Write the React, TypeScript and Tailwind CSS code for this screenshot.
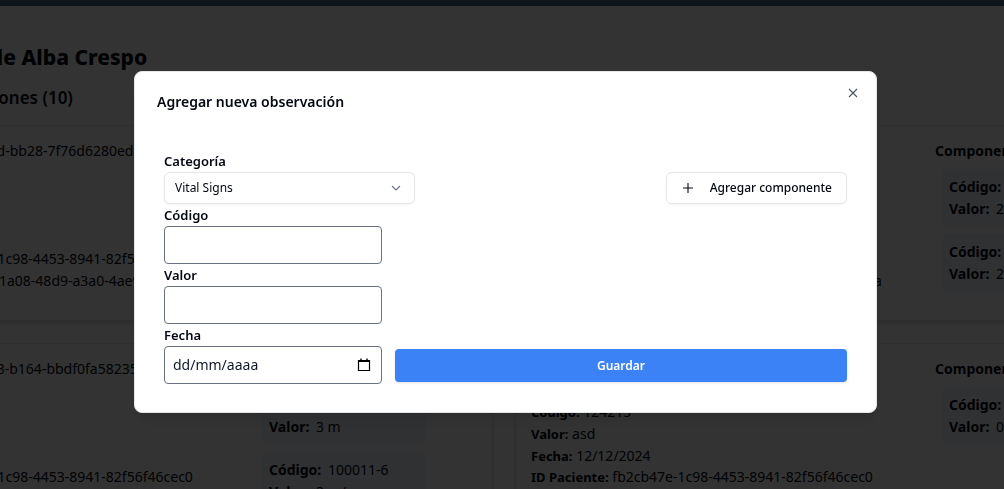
import React from "react";

type Component = { code: string; value: string };

type Observation = {
  id: string;
  category: string;
  code: string;
  value: string;
  date: string;
  patient: string;
  encounter: string;
  components: Component[];
};

const patient = "fb2cb47e-1c98-4453-8941-82f56f46cec0";
const encounter = "f7fc2cfe-1a08-48d9-a3a0-4ae97b60f13a";

const observations: Observation[] = [
  {
    id: "5e0b7c1a-94f2-4c9d-bb28-7f76d6280ed4",
    category: "Vital Signs",
    code: "85354-9",
    value: "120",
    date: "12/12/2024",
    patient,
    encounter,
    components: [{ code: "8480-6", value: "120 mmHg" }],
  },
  {
    id: "b7f3a920-61de-4a07-9c15-2d84e0b6f7c1",
    category: "Vital Signs",
    code: "85354-9",
    value: "2",
    date: "12/12/2024",
    patient,
    encounter,
    components: [
      { code: "8480-6", value: "2 m" },
      { code: "8462-4", value: "2 m" },
    ],
  },
  {
    id: "c49f1c63-07d2-4e83-b164-bbdf0fa58235",
    category: "Vital Signs",
    code: "100010-8",
    value: "3",
    date: "12/12/2024",
    patient,
    encounter,
    components: [
      { code: "100010-8", value: "3 m" },
      { code: "100011-6", value: "3 m/s" },
    ],
  },
  {
    id: "e92a4b17-d5c0-4f36-8a7e-91c03fd6b258",
    category: "Laboratory",
    code: "124215",
    value: "asd",
    date: "12/12/2024",
    patient,
    encounter,
    components: [{ code: "2339-0", value: "0 mg" }],
  },
];

function Detail({ label, children }: { label: string; children: string }) {
  return (
    <p className="whitespace-nowrap">
      <strong className="text-[13px] leading-none font-bold">{label}:</strong> {children}
    </p>
  );
}

function ObservationCard({ item }: { item: Observation }) {
  return (
    <article className="flex rounded-lg border border-gray-200 bg-white px-[15px] pt-[15px] pb-7 text-sm shadow-md">
      <div className="grid h-[150px] w-[404px] shrink-0 content-between leading-5">
        <Detail label="ID">{item.id}</Detail>
        <Detail label="Categoría">{item.category}</Detail>
        <Detail label="Código">{item.code}</Detail>
        <Detail label="Valor">{item.value}</Detail>
        <Detail label="Fecha">{item.date}</Detail>
        <Detail label="ID Paciente">{item.patient}</Detail>
        <Detail label="ID Encuentro">{item.encounter}</Detail>
      </div>
      <div>
        <h3 className="leading-5 font-bold">Componentes:</h3>
        <ul className="mt-2 ml-[7px] flex flex-col gap-[7px]">
          {item.components.map((c) => (
            <li key={c.code} className="w-[163px] rounded-md bg-[#eff3f8] p-[7px] leading-[22px]">
              <p>
                <strong className="mr-[3px] font-bold">Código:</strong> {c.code}
              </p>
              <p>
                <strong className="mr-[3px] font-bold">Valor:</strong> {c.value}
              </p>
            </li>
          ))}
        </ul>
      </div>
    </article>
  );
}

function TextField({ id, label }: { id: string; label: string }) {
  return (
    <div className="flex w-[218px] flex-col">
      <label htmlFor={id} className="leading-[22px] font-semibold">
        {label}
      </label>
      <input id={id} type="text" className="h-[38px] rounded-sm border border-gray-500 bg-white px-2 text-sm outline-none" />
    </div>
  );
}

function ObservationDialog() {
  return (
    <div className="fixed inset-0 flex items-start bg-black/80 pt-[71px] pr-[127px] pl-[134px]">
      <section
        role="dialog"
        aria-modal="true"
        aria-labelledby="dialog-title"
        className="relative w-full rounded-lg border border-gray-200 bg-white px-[22px] pt-5 pb-7 shadow-lg"
      >
        <h2 id="dialog-title" className="text-sm leading-5 font-semibold">
          Agregar nueva observación
        </h2>
        <button type="button" aria-label="Cerrar" className="absolute top-[14px] right-4 text-gray-600">
          <svg width="14" height="14" viewBox="0 0 14 14" fill="none" stroke="currentColor" strokeWidth="1.1">
            <path d="M3 3l8 8M11 3l-8 8" />
          </svg>
        </button>

        <form className="mt-[38px] px-[7px]">
          <div className="flex items-end justify-between">
            <div className="flex w-[251px] flex-col">
              <label htmlFor="categoria" className="leading-[22px] font-semibold">
                Categoría
              </label>
              <div className="relative">
                <select
                  id="categoria"
                  className="h-8 w-full appearance-none rounded-md border border-gray-200 bg-white pr-8 pl-[10px] text-[12px] shadow-xs outline-none"
                >
                  <option>Vital Signs</option>
                </select>
                <svg
                  className="pointer-events-none absolute top-[9px] right-3 text-gray-500"
                  width="14"
                  height="14"
                  viewBox="0 0 14 14"
                  fill="none"
                  stroke="currentColor"
                  strokeWidth="1.1"
                >
                  <path d="M3 5l4 4 4-4" />
                </svg>
              </div>
            </div>
            <button
              type="button"
              className="flex h-8 items-center gap-[15px] rounded-md border border-gray-200 bg-white px-[14px] text-[12px] font-medium shadow-xs"
            >
              <svg width="14" height="14" viewBox="0 0 14 14" fill="none" stroke="currentColor" strokeWidth="1.1">
                <path d="M7 2v10M2 7h10" />
              </svg>
              Agregar componente
            </button>
          </div>
          <TextField id="codigo" label="Código" />
          <TextField id="valor" label="Valor" />
          <div className="flex items-end gap-[13px]">
            <div className="flex w-[218px] shrink-0 flex-col">
              <label htmlFor="fecha" className="leading-[22px] font-semibold">
                Fecha
              </label>
              <div className="flex h-[38px] items-center rounded-sm border border-gray-500 bg-white pr-[10px] pl-2">
                <input
                  id="fecha"
                  type="text"
                  placeholder="dd/mm/aaaa"
                  className="w-full min-w-0 text-sm outline-none placeholder:text-gray-900"
                />
                <button type="button" aria-label="Abrir calendario" className="shrink-0">
                  <svg width="14" height="14" viewBox="0 0 14 14" fill="none" stroke="#000">
                    <path d="M1.5 2.5h11v10h-11z" strokeWidth="1.2" />
                    <path d="M1 3h12" strokeWidth="2" />
                    <path d="M4 .5v2M10 .5v2" strokeWidth="1.4" />
                  </svg>
                </button>
              </div>
            </div>
            <button
              type="submit"
              className="mb-[2px] h-[33px] flex-1 rounded-sm bg-[#3b82f6] text-[12px] font-semibold text-white shadow-sm"
            >
              Guardar
            </button>
          </div>
        </form>
      </section>
    </div>
  );
}

export default function App() {
  return (
    <div className="h-screen overflow-hidden bg-white font-['Noto_Sans','Open_Sans',sans-serif] text-[13px] text-gray-950">
      <header className="h-[6px] bg-[#466b7a]" />
      <main className="-ml-[165px] w-[1338px] pt-[35px]">
        <div className="-ml-[7px]">
          <h1 className="text-[21px] leading-8 font-extrabold">Observaciones de Alba Crespo</h1>
          <h2 className="mt-3 pl-[88px] text-[17px] leading-[26px] font-semibold">Observaciones (10)</h2>
        </div>
        <div className="mt-[14px] grid grid-cols-2 gap-[22px]">
          {observations.map((item) => (
            <ObservationCard key={item.id} item={item} />
          ))}
        </div>
      </main>
      <ObservationDialog />
    </div>
  );
}
